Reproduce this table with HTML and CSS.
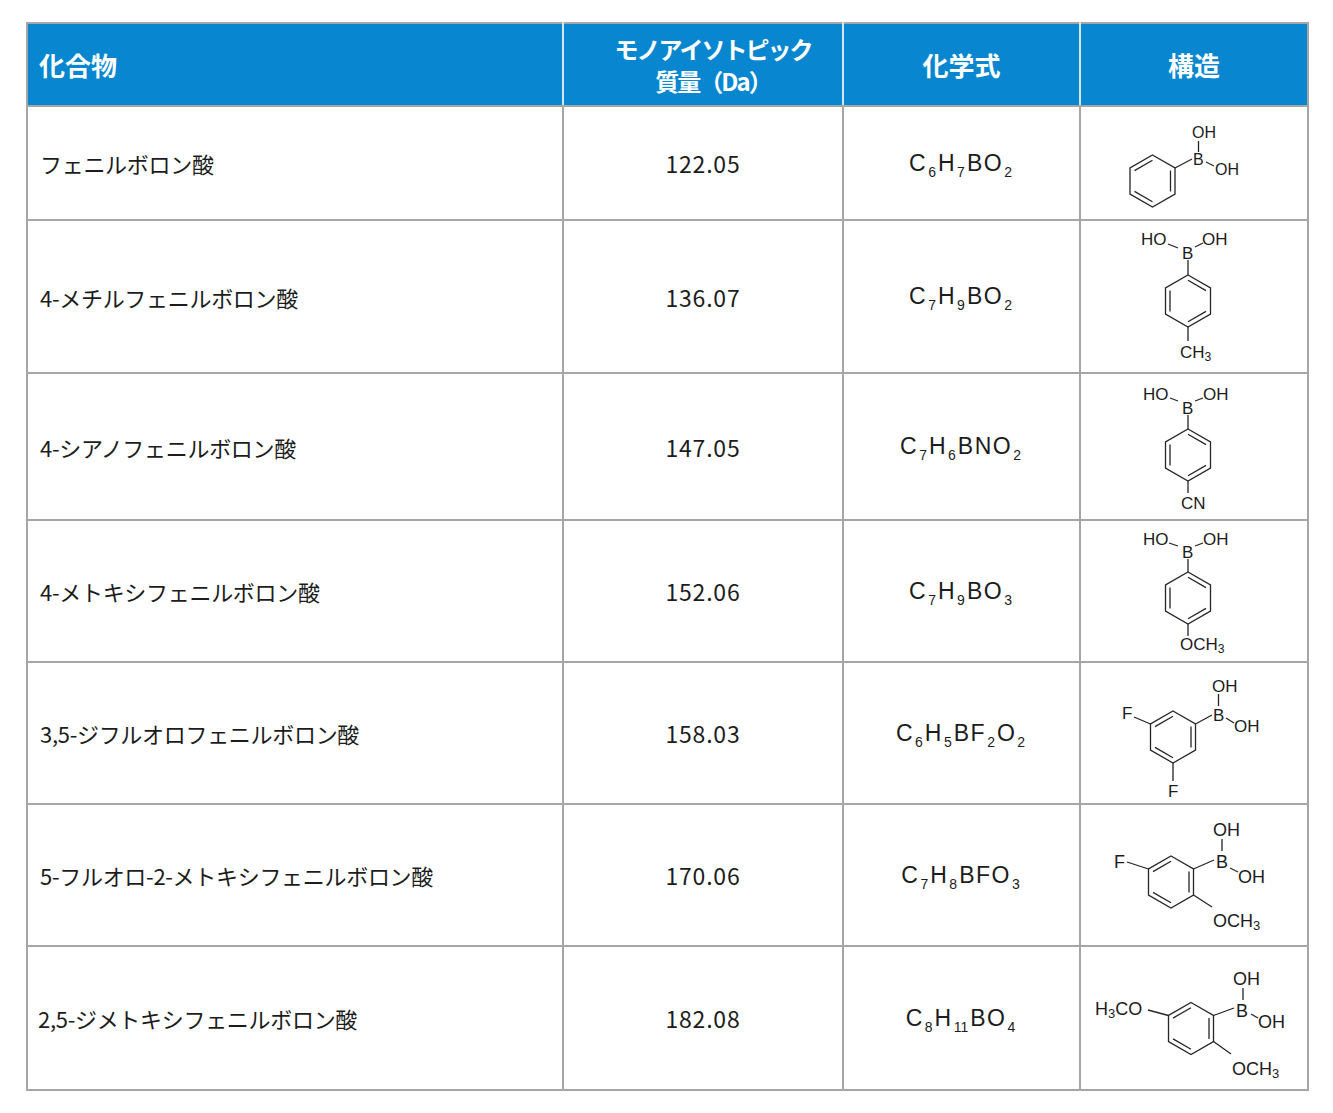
FILE: index.html
```html
<!DOCTYPE html>
<html lang="ja">
<head>
<meta charset="utf-8">
<title>ボロン酸</title>
<link rel="stylesheet" href="styles.css">
</head>
<body>
<table class="tbl">
  <colgroup>
    <col class="c1"><col class="c2"><col class="c3"><col class="c4">
  </colgroup>
  <thead>
    <tr class="head">
      <th class="h-name">化合物</th>
      <th class="h-mass">モノアイソトピック<br>質量（Da）</th>
      <th>化学式</th>
      <th>構造</th>
    </tr>
  </thead>
  <tbody>
    <tr>
      <td class="name">フェニルボロン酸</td>
      <td class="mass">122.05</td>
      <td class="formula">C<sub>6</sub>H<sub>7</sub>BO<sub>2</sub></td>
      <td class="struct">
        <svg class="mol" width="226" height="112" viewBox="0 0 226 112">
          <g class="bond">
            <g transform="translate(71.5,74)">
              <polygon points="0,-26 22.5,-13 22.5,13 0,26 -22.5,13 -22.5,-13"/>
              <path d="M18,-10.4 L18,10.4 M0,20.8 L-18,10.4 M-18,-10.4 L0,-20.8"/>
            </g>
            <path d="M94,61 L111,52 M117.5,34 L117.5,45 M125,55 L133,59"/>
          </g>
          <g class="lab s16">
            <text x="112" y="58">B</text>
            <text x="111" y="31">OH</text>
            <text x="134" y="68">OH</text>
          </g>
        </svg>
      </td>
    </tr>
    <tr>
      <td class="name">4-メチルフェニルボロン酸</td>
      <td class="mass">136.07</td>
      <td class="formula">C<sub>7</sub>H<sub>9</sub>BO<sub>2</sub></td>
      <td class="struct">
        <svg class="mol" width="226" height="151" viewBox="0 0 226 151">
          <g class="bond">
            <g transform="translate(107,80)">
              <polygon points="0,-26 22.5,-13 22.5,13 0,26 -22.5,13 -22.5,-13"/>
              <path d="M0,-20.8 L18,-10.4 M18,10.4 L0,20.8 M-18,10.4 L-18,-10.4"/>
            </g>
            <path d="M107,39 L107,54 M87,23 L97,27 M114,26 L122,22 M107,106 L107,120"/>
          </g>
          <g class="lab s17">
            <text x="60" y="24">HO</text>
            <text x="101" y="38">B</text>
            <text x="121" y="24">OH</text>
            <text x="99" y="137">CH<tspan class="sub" dy="3">3</tspan></text>
          </g>
        </svg>
      </td>
    </tr>
    <tr>
      <td class="name">4-シアノフェニルボロン酸</td>
      <td class="mass">147.05</td>
      <td class="formula">C<sub>7</sub>H<sub>6</sub>BNO<sub>2</sub></td>
      <td class="struct">
        <svg class="mol" width="226" height="145" viewBox="0 0 226 145">
          <g class="bond">
            <g transform="translate(107,81)">
              <polygon points="0,-26 22.5,-13 22.5,13 0,26 -22.5,13 -22.5,-13"/>
              <path d="M0,-20.8 L18,-10.4 M18,10.4 L0,20.8 M-18,10.4 L-18,-10.4"/>
            </g>
            <path d="M107,41 L107,55 M89,24 L97,27 M114,27 L122,24 M107,107 L107,119"/>
          </g>
          <g class="lab s17">
            <text x="62" y="26">HO</text>
            <text x="101" y="40">B</text>
            <text x="122" y="26">OH</text>
            <text x="100" y="135">CN</text>
          </g>
        </svg>
      </td>
    </tr>
    <tr>
      <td class="name">4-メトキシフェニルボロン酸</td>
      <td class="mass">152.06</td>
      <td class="formula">C<sub>7</sub>H<sub>9</sub>BO<sub>3</sub></td>
      <td class="struct">
        <svg class="mol" width="226" height="140" viewBox="0 0 226 140">
          <g class="bond">
            <g transform="translate(107,77)">
              <polygon points="0,-26 22.5,-13 22.5,13 0,26 -22.5,13 -22.5,-13"/>
              <path d="M0,-20.8 L18,-10.4 M18,10.4 L0,20.8 M-18,10.4 L-18,-10.4"/>
            </g>
            <path d="M107,38 L107,51 M88,22 L97,25 M114,25 L122,22 M107,103 L107,115"/>
          </g>
          <g class="lab s17">
            <text x="62" y="24">HO</text>
            <text x="101" y="37">B</text>
            <text x="122" y="24">OH</text>
            <text x="99" y="129">OCH<tspan class="sub" dy="3">3</tspan></text>
          </g>
        </svg>
      </td>
    </tr>
    <tr>
      <td class="name">3,5-ジフルオロフェニルボロン酸</td>
      <td class="mass">158.03</td>
      <td class="formula">C<sub>6</sub>H<sub>5</sub>BF<sub>2</sub>O<sub>2</sub></td>
      <td class="struct">
        <svg class="mol" width="226" height="140" viewBox="0 0 226 140">
          <g class="bond">
            <g transform="translate(92,74)">
              <polygon points="0,-26 22.5,-13 22.5,13 0,26 -22.5,13 -22.5,-13"/>
              <path d="M18,-10.4 L18,10.4 M0,20.8 L-18,10.4 M-18,-10.4 L0,-20.8"/>
            </g>
            <path d="M53,54 L69.5,61 M92,100 L92,118 M114.5,61 L131,52 M137.5,31 L137.5,43 M145,55 L153,60"/>
          </g>
          <g class="lab s17">
            <text x="41" y="56">F</text>
            <text x="87" y="134">F</text>
            <text x="132" y="58">B</text>
            <text x="131" y="29">OH</text>
            <text x="153" y="69">OH</text>
          </g>
        </svg>
      </td>
    </tr>
    <tr>
      <td class="name">5-フルオロ-2-メトキシフェニルボロン酸</td>
      <td class="mass">170.06</td>
      <td class="formula">C<sub>7</sub>H<sub>8</sub>BFO<sub>3</sub></td>
      <td class="struct">
        <svg class="mol" width="226" height="140" viewBox="0 0 226 140">
          <g class="bond">
            <g transform="translate(90,77)">
              <polygon points="0,-26 22.5,-13 22.5,13 0,26 -22.5,13 -22.5,-13"/>
              <path d="M18,-10.4 L18,10.4 M0,20.8 L-18,10.4 M-18,-10.4 L0,-20.8"/>
            </g>
            <path d="M46,57 L67.5,64 M112.5,64 L133,55 M141,34 L141,46 M149,63 L157,67 M112.5,90 L131,102"/>
          </g>
          <g class="lab s18">
            <text x="33" y="63">F</text>
            <text x="135" y="63">B</text>
            <text x="132" y="31">OH</text>
            <text x="157" y="78">OH</text>
            <text x="132" y="122">OCH<tspan class="sub" dy="3">3</tspan></text>
          </g>
        </svg>
      </td>
    </tr>
    <tr>
      <td class="name name-last">2,5-ジメトキシフェニルボロン酸</td>
      <td class="mass">182.08</td>
      <td class="formula">C<sub>8</sub>H<sub>11</sub>BO<sub>4</sub></td>
      <td class="struct">
        <svg class="mol" width="226" height="142" viewBox="0 0 226 142">
          <g class="bond">
            <g transform="translate(110,81.5)">
              <polygon points="0,-26 22.5,-13 22.5,13 0,26 -22.5,13 -22.5,-13"/>
              <path d="M18,-10.4 L18,10.4 M0,20.8 L-18,10.4 M-18,-10.4 L0,-20.8"/>
            </g>
            <path d="M67,63 L87.5,68.5 M132.5,68.5 L153,61 M162,41 L162,53 M170,67 L177,71 M132.5,94.5 L150,107"/>
          </g>
          <g class="lab s18">
            <text x="14" y="68">H<tspan class="sub" dy="3">3</tspan><tspan dy="-3">CO</tspan></text>
            <text x="155" y="70">B</text>
            <text x="152" y="38">OH</text>
            <text x="177" y="81">OH</text>
            <text x="151" y="128">OCH<tspan class="sub" dy="3">3</tspan></text>
          </g>
        </svg>
      </td>
    </tr>
  </tbody>
</table>
</body>
</html>
```

FILE: styles.css
```css
body {
  margin: 0;
  background: #ffffff;
}

.tbl {
  border-collapse: collapse;
  table-layout: fixed;
  width: 1281px;
  margin: 22px 0 0 26px;
  font-family: "Noto Sans CJK JP", "Noto Sans", sans-serif;
  color: #1c1c1c;
}

.c1 { width: 536px; }
.c2 { width: 280px; }
.c3 { width: 237px; }
.c4 { width: 228px; }

.tbl th,
.tbl td {
  border: 2px solid #a6a6a6;
  padding: 0;
  vertical-align: middle;
}

.tbl .head th {
  background: #0887d0;
  color: #ffffff;
  height: 81px;
  font-size: 26px;
  font-weight: 700;
  text-align: center;
  border-left-color: #d4e6f2;
  border-right-color: #d4e6f2;
  line-height: 32px;
}

.tbl .head th.h-name {
  text-align: left;
  padding-left: 11px;
  border-left-color: #a6a6a6;
}

.tbl .head th:last-child {
  border-right-color: #a6a6a6;
}

.tbl .head th.h-mass {
  font-size: 24px;
  letter-spacing: -2px;
  padding-left: 20px;
  line-height: 32px;
}

.tbl .name {
  padding-left: 12px;
  font-size: 22px;
  letter-spacing: -0.3px;
}

.tbl .name-last {
  padding-left: 10px;
}

.tbl .mass {
  text-align: center;
  font-size: 23px;
  letter-spacing: 0.8px;
}

.tbl .formula {
  text-align: center;
  font-family: "Liberation Sans", Arial, sans-serif;
  font-size: 23px;
  letter-spacing: 1.5px;
}

.formula sub {
  font-size: 14px;
  vertical-align: -6px;
  line-height: 0;
  letter-spacing: 0;
  margin-left: 1px;
  margin-right: 2px;
}

.mol {
  display: block;
}

.bond {
  fill: none;
  stroke: #262626;
  stroke-width: 1.3;
}

.lab {
  font-family: "Liberation Sans", Arial, sans-serif;
  fill: #1c1c1c;
}

.s16 { font-size: 16px; }
.s17 { font-size: 17px; }
.s18 { font-size: 18px; }

.sub {
  font-size: 0.72em;
}
```
